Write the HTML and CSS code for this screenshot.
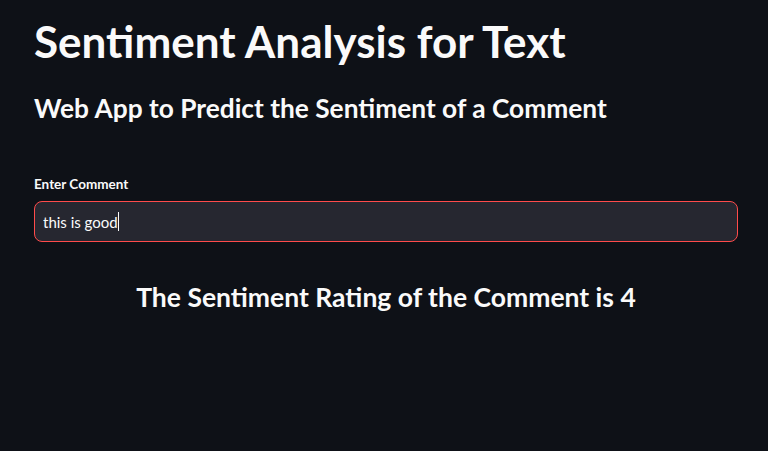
FILE: index.html
```html
<!DOCTYPE html>
<html lang="en">
<head>
<meta charset="utf-8">
<title>Sentiment Analysis for Text</title>
<link rel="stylesheet" href="styles.css">
</head>
<body>
<main class="main">
  <h1 class="title">Sentiment Analysis for Text</h1>
  <h2 class="subtitle">Web App to Predict the Sentiment of a Comment</h2>
  <div class="field">
    <label class="label" for="comment">Enter Comment</label>
    <div class="input-wrap">
      <input id="comment" class="input" type="text" value="this is good"><span class="caret"></span>
    </div>
  </div>
  <h3 class="result">The Sentiment Rating of the Comment is 4</h3>
</main>
</body>
</html>
```
FILE: styles.css
```css
html, body {
  margin: 0;
  padding: 0;
  background: #0e1117;
  color: #fafafa;
  font-family: Lato, "Noto Sans", sans-serif;
}
.main {
  padding: 15px 30px 0 34px;
  display: flex;
  flex-direction: column;
}
.title {
  margin: 0;
  font-size: 44px;
  font-weight: 700;
  line-height: 52px;
}
.subtitle {
  margin: 23px 0 0;
  font-size: 26.3px;
  font-weight: 700;
  line-height: 36px;
}
.field {
  margin-top: 50px;
  display: flex;
  flex-direction: column;
  gap: 9px;
}
.label {
  font-size: 13.5px;
  font-weight: 700;
  line-height: 16px;
}
.input-wrap {
  position: relative;
  height: 41px;
  box-sizing: border-box;
  border: 1px solid #ff4b4b;
  border-radius: 8px;
  background: #262730;
  display: flex;
  align-items: center;
}
.input {
  border: none;
  outline: none;
  background: transparent;
  color: #fafafa;
  font-family: Lato, "Noto Sans", sans-serif;
  font-size: 15px;
  padding: 0 0 0 8px;
  width: 75px;
}
.caret {
  width: 1px;
  height: 19px;
  background: #fafafa;
}
.result {
  margin: 37px 0 0;
  text-align: center;
  font-size: 26.5px;
  font-weight: 700;
  line-height: 36px;
}
```
